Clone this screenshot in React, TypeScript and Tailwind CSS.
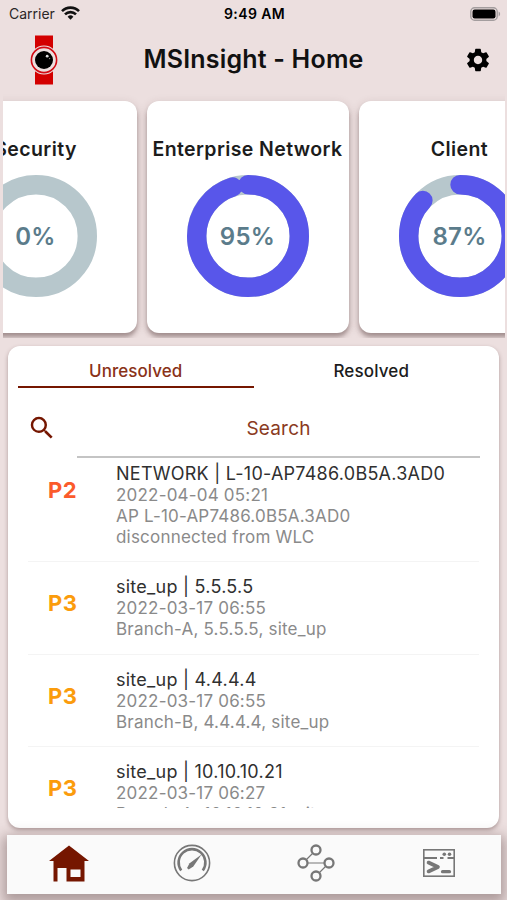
import { MdSearch, MdSettings } from "react-icons/md";

type Score = {
  title: string;
  value: number;
};

type Alert = {
  priority: "P2" | "P3";
  title: string;
  time: string;
  detail: string[];
};

const scores: Score[] = [
  { title: "Security", value: 0 },
  { title: "Enterprise Network", value: 95 },
  { title: "Client", value: 87 },
];

const alerts: Alert[] = [
  {
    priority: "P2",
    title: "NETWORK | L-10-AP7486.0B5A.3AD0",
    time: "2022-04-04 05:21",
    detail: ["AP L-10-AP7486.0B5A.3AD0", "disconnected from WLC"],
  },
  { priority: "P3", title: "site_up | 5.5.5.5", time: "2022-03-17 06:55", detail: ["Branch-A, 5.5.5.5, site_up"] },
  { priority: "P3", title: "site_up | 4.4.4.4", time: "2022-03-17 06:55", detail: ["Branch-B, 4.4.4.4, site_up"] },
  { priority: "P3", title: "site_up | 10.10.10.21", time: "2022-03-17 06:27", detail: ["Branch-A, 10.10.10.21, site_up"] },
];

function StatusBar() {
  return (
    <div className="grid h-7 grid-cols-3 items-center pb-px pl-[9px] pr-[6px]">
      <div className="flex items-center gap-[6px] text-[14px] text-[#2b2627]">
        Carrier
        <svg viewBox="0 0 19 14" className="-mt-[2px] h-[14px] w-[19px]" fill="none" stroke="#111" strokeWidth="2.6">
          <path d="M1 5.2a12 12 0 0 1 17 0" />
          <path d="M4 8.4a7.8 7.8 0 0 1 11 0" />
          <path d="M9.5 13.8l-2.9-3a4.1 4.1 0 0 1 5.8 0z" fill="#111" stroke="none" />
        </svg>
      </div>
      <div className="pr-px text-center text-[14px] font-semibold tracking-[0.4px] text-black">9:49 AM</div>
      <svg viewBox="0 0 31 14" className="h-[14px] w-[31px] justify-self-end">
        <rect x="0.8" y="0.8" width="26.4" height="12.4" rx="3.8" fill="none" stroke="#a39d9e" strokeWidth="1.4" />
        <rect x="2.5" y="2.5" width="23" height="9" rx="2.2" fill="#000" />
        <path d="M28.6 4.6c2 .8 2 4 0 4.8z" fill="#a39d9e" />
      </svg>
    </div>
  );
}

function WatchLogo() {
  return (
    <svg viewBox="0 0 28 50" className="h-[50px] w-7">
      <rect x="5" y="0.5" width="18" height="49" fill="#d30000" />
      <circle cx="14" cy="25" r="14.5" fill="#ecdfdf" />
      <circle cx="14" cy="25" r="12.6" fill="none" stroke="#d30b14" strokeWidth="1.6" />
      <circle cx="14" cy="25" r="9" fill="#000" />
      <circle cx="17.2" cy="21.2" r="1.4" fill="#ddd" />
      <circle cx="19.6" cy="23.6" r="0.7" fill="#999" />
    </svg>
  );
}

function Ring({ value }: { value: number }) {
  const r = 51.3;
  const length = 2 * Math.PI * r;
  return (
    <svg viewBox="0 0 122 122" className="h-[122px] w-[122px]">
      <circle cx="61" cy="61" r={r} fill="none" stroke="#b7c7cc" strokeWidth="19.4" />
      {value > 0 && (
        <circle
          cx="61"
          cy="61"
          r={r}
          fill="none"
          stroke="#5856ea"
          strokeWidth="19.4"
          strokeLinecap="round"
          strokeDasharray={`${(length * value) / 100} ${length}`}
          transform="rotate(-90 61 61)"
        />
      )}
      <text x="60.5" y="69.5" textAnchor="middle" fontSize="24" fontWeight="600" letterSpacing="0.3" fill="#5b7c8b">
        {value}%
      </text>
    </svg>
  );
}

function ScoreCard({ title, value }: Score) {
  return (
    <div className="flex h-[232px] w-[202px] shrink-0 flex-col items-center rounded-xl bg-white pt-9 shadow-[0_4px_4px_rgba(70,45,45,0.38),0_2px_10px_rgba(80,50,50,0.15)]">
      <h2 className="whitespace-nowrap text-[19.5px] font-semibold leading-6 tracking-[0.4px] text-[#1c1c1c]">{title}</h2>
      <div className="mt-[14px]">
        <Ring value={value} />
      </div>
    </div>
  );
}

function AlertRow({ alert }: { alert: Alert }) {
  return (
    <div className="flex border-b border-[#f4f4f4] pb-[13.6px] pt-[14px]">
      <div
        className={`w-[88px] shrink-0 pl-5 pt-[13px] text-[22px] font-bold leading-7 tracking-[0.4px] ${
          alert.priority === "P2" ? "text-[#fb5b2b]" : "text-[#fb9c0c]"
        }`}
      >
        {alert.priority}
      </div>
      <div className="whitespace-nowrap text-[17px] leading-[21px] tracking-[0.2px] text-[#8a8a8a]">
        <p className="text-[18px] leading-[22px] tracking-[0.25px] text-[#303030]">{alert.title}</p>
        <p>{alert.time}</p>
        {alert.detail.map(line => (
          <p key={line}>{line}</p>
        ))}
      </div>
    </div>
  );
}

function TabBar() {
  return (
    <nav className="ml-[7px] mr-[6px] mt-[7px] grid h-[59px] grid-cols-4 place-items-center bg-[#fafafa] pb-[3px] shadow-[0_5px_12px_4px_rgba(70,45,45,0.38)]">
      {/* Home */}
      <svg viewBox="0 0 40 37" className="h-[37px] w-10" fill="#751600">
        <path fillRule="evenodd" d="M20 0.5L40 16h-4.5v20.5H17.5v-13.5h-9v13.5H4.5V16H0zM21.5 24.5v7.5h10v-7.5z" />
      </svg>
      {/* Dashboard */}
      <svg viewBox="0 0 38 38" className="h-[38px] w-[38px]" fill="none" stroke="#777">
        <circle cx="19" cy="19" r="17.6" strokeWidth="1.6" />
        <path d="M8.2 26.5a13.4 13.4 0 1 1 21.6 0" strokeWidth="2.6" />
        <path d="M28.5 10.5L20.3 22.5l-4.6 3-1.7-1.4 2.6-4.8z" fill="#777" stroke="none" />
      </svg>
      {/* Topology */}
      <svg viewBox="0 0 38 38" className="h-[38px] w-[38px]" fill="#fafafa" stroke="#777">
        <path d="M19 6L6 19h26L19 32" fill="none" strokeWidth="1.2" />
        <g strokeWidth="2.3">
          <circle cx="19" cy="6" r="4.5" />
          <circle cx="6" cy="19" r="4.5" />
          <circle cx="32" cy="19" r="4.5" />
          <circle cx="19" cy="32" r="4.5" />
        </g>
      </svg>
      {/* Command runner */}
      <svg viewBox="0 0 32 28" className="h-7 w-8" fill="none" stroke="#777">
        <rect x="0.8" y="0.8" width="30.4" height="26.4" strokeWidth="1.6" />
        <path d="M1 9h13M17 9h3.5M24.5 9H31" strokeWidth="2" />
        <path d="M5.5 13.5l9.5 4.5-9.5 4.5" strokeWidth="3.6" strokeLinejoin="round" strokeLinecap="round" />
        <path d="M19.5 22.7h7" strokeWidth="3.2" strokeLinecap="round" />
        <circle cx="21.3" cy="5.2" r="1.8" fill="#777" stroke="none" />
        <circle cx="26.5" cy="5.2" r="1.8" fill="#777" stroke="none" />
      </svg>
    </nav>
  );
}

export default function App() {
  return (
    <div className="flex h-[900px] w-[507px] flex-col overflow-hidden bg-[#ecdfdf] font-['Inter','Liberation_Sans',sans-serif]">
      <StatusBar />

      {/* Header */}
      <header className="grid h-16 grid-cols-[60px_1fr_60px] items-center pl-[30px] pr-[15px]">
        <WatchLogo />
        <h1 className="whitespace-nowrap pr-[15px] text-center text-[25px] font-semibold tracking-[0.2px] text-[#111]">
          MSInsight - Home
        </h1>
        <MdSettings className="h-7 w-7 justify-self-end text-black" />
      </header>

      {/* Health scores */}
      <section className="ml-[3px] mr-[2px] flex h-[246px] overflow-hidden pt-[9px]">
        <div className="-ml-[68.5px] flex gap-[10px]">
          {scores.map(score => (
            <ScoreCard key={score.title} {...score} />
          ))}
        </div>
      </section>

      {/* Alerts */}
      <section className="ml-2 mr-2 mt-2 flex h-[482px] flex-col rounded-xl bg-white px-[10px] shadow-[0_2px_4px_rgba(80,50,50,0.4)]">
        <div className="grid h-[42px] grid-cols-2 text-center text-[17px] font-medium">
          <button className="border-b-[2.5px] border-[#751600] pt-3 tracking-[0.05px] text-[#8a3218]">Unresolved</button>
          <button className="border-b-[2.5px] border-transparent pt-3 tracking-[0.15px] text-[#1c1c1c]">Resolved</button>
        </div>
        <div className="flex h-[70px] items-center pl-[9px] pr-[9px]">
          <MdSearch className="mt-[9px] h-[30px] w-[30px] text-[#751600]" />
          <div className="ml-5 flex h-full flex-1 items-center justify-center border-b-2 border-[#c4c4c4] pt-[14px] text-[19px] tracking-[0.2px] text-[#8a3a22]">
            Search
          </div>
        </div>
        <div className="mx-[10px] h-[350px] overflow-hidden">
          <div className="-mt-[9.4px]">
            {alerts.map(alert => (
              <AlertRow key={alert.title} alert={alert} />
            ))}
          </div>
        </div>
      </section>

      <TabBar />
    </div>
  );
}
